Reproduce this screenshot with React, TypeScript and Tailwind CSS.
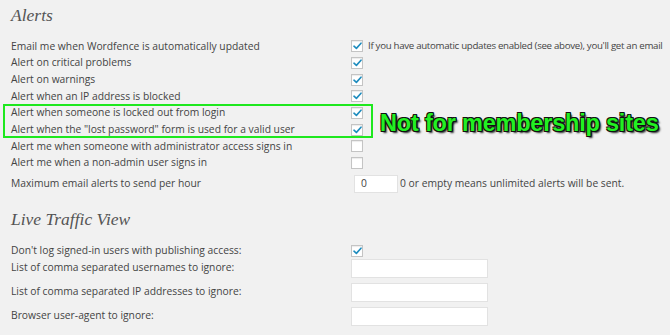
import React from "react";

const font = { fontFamily: '"Open Sans", "Liberation Sans", sans-serif' };
const serif = { fontFamily: '"Liberation Serif", "DejaVu Serif", serif' };

function Check({ checked }: { checked: boolean }) {
  return (
    <span className="inline-flex h-[12px] w-[12px] shrink-0 items-center justify-center border border-[#c4c4c4] bg-white shadow-[inset_0_1px_1px_rgba(0,0,0,0.08)]">
      {checked && (
        <svg width="9" height="8" viewBox="0 0 9 8">
          <path d="M1 4.2 L3.4 6.4 L8 1.2" fill="none" stroke="#1e8cbe" strokeWidth="1.6" strokeLinecap="round" strokeLinejoin="round" />
        </svg>
      )}
    </span>
  );
}

const alertRows: { label: string; checked: boolean; note?: string }[] = [
  { label: "Email me when Wordfence is automatically updated", checked: true, note: "If you have automatic updates enabled (see above), you'll get an email" },
  { label: "Alert on critical problems", checked: true },
  { label: "Alert on warnings", checked: true },
  { label: "Alert when an IP address is blocked", checked: true },
  { label: "Alert when someone is locked out from login", checked: true },
  { label: 'Alert when the "lost password" form is used for a valid user', checked: true },
  { label: "Alert me when someone with administrator access signs in", checked: false },
  { label: "Alert me when a non-admin user signs in", checked: false },
];

const ignoreRows = [
  "List of comma separated usernames to ignore:",
  "List of comma separated IP addresses to ignore:",
  "Browser user-agent to ignore:",
];

export default function App() {
  return (
    <div className="relative h-[335px] w-[670px] overflow-hidden bg-[#f1f1f1] text-[10.3px] text-[#444]" style={font}>
      <div className="pl-[11px] pt-[1px]">
        <h2 className="h-[28px] text-[17.5px] italic leading-[28px] text-[#555]" style={serif}>
          Alerts
        </h2>
        <div className="mt-[9px]">
          {alertRows.map((r) => (
            <div key={r.label} className="flex h-[16.7px] items-center whitespace-nowrap">
              <div className="w-[340px] shrink-0">{r.label}</div>
              <Check checked={r.checked} />
              {r.note && <span className="ml-[5px] text-[9.7px] tracking-[-0.3px]">{r.note}</span>}
            </div>
          ))}
          <div className="mt-[2px] flex h-[20px] items-center whitespace-nowrap">
            <div className="w-[343px] shrink-0">Maximum email alerts to send per hour</div>
            <div className="flex h-[18px] w-[44px] shrink-0 items-center border border-[#e2e2e2] bg-white pl-[6px]">0</div>
            <span className="ml-[2px]">0 or empty means unlimited alerts will be sent.</span>
          </div>
        </div>

        <h2 className="mt-[11px] h-[28px] text-[17.5px] italic leading-[28px] text-[#555]" style={serif}>
          Live Traffic View
        </h2>
        <div className="mt-[11px] flex h-[14px] items-center whitespace-nowrap">
          <div className="w-[340px] shrink-0">Don't log signed-in users with publishing access:</div>
          <Check checked />
        </div>
        <div className="mt-[1px] flex flex-col gap-[5px]">
          {ignoreRows.map((l) => (
            <div key={l} className="flex h-[19px] items-center whitespace-nowrap">
              <div className="w-[340px] shrink-0">{l}</div>
              <div className="h-[19px] w-[137px] border border-[#e2e2e2] bg-white" />
            </div>
          ))}
        </div>
      </div>

      <div className="absolute left-[3px] top-[104px] h-[34px] w-[370px] border-2 border-[#1ee81e]" />
      <div
        className="absolute left-[380px] top-[108px] whitespace-nowrap text-[23.5px] font-bold leading-[30px] tracking-[-0.2px] text-[#22f022]"
        style={{ fontFamily: '"Liberation Sans", Arial, sans-serif', textShadow: "1px 1px 0 #111, -1px -1px 0 #111, 1px -1px 0 #111, -1px 1px 0 #111, 0 1px 0 #111, 1px 0 0 #111, 2px 2px 2px #222" }}
      >
        Not for membership sites
      </div>
    </div>
  );
}
